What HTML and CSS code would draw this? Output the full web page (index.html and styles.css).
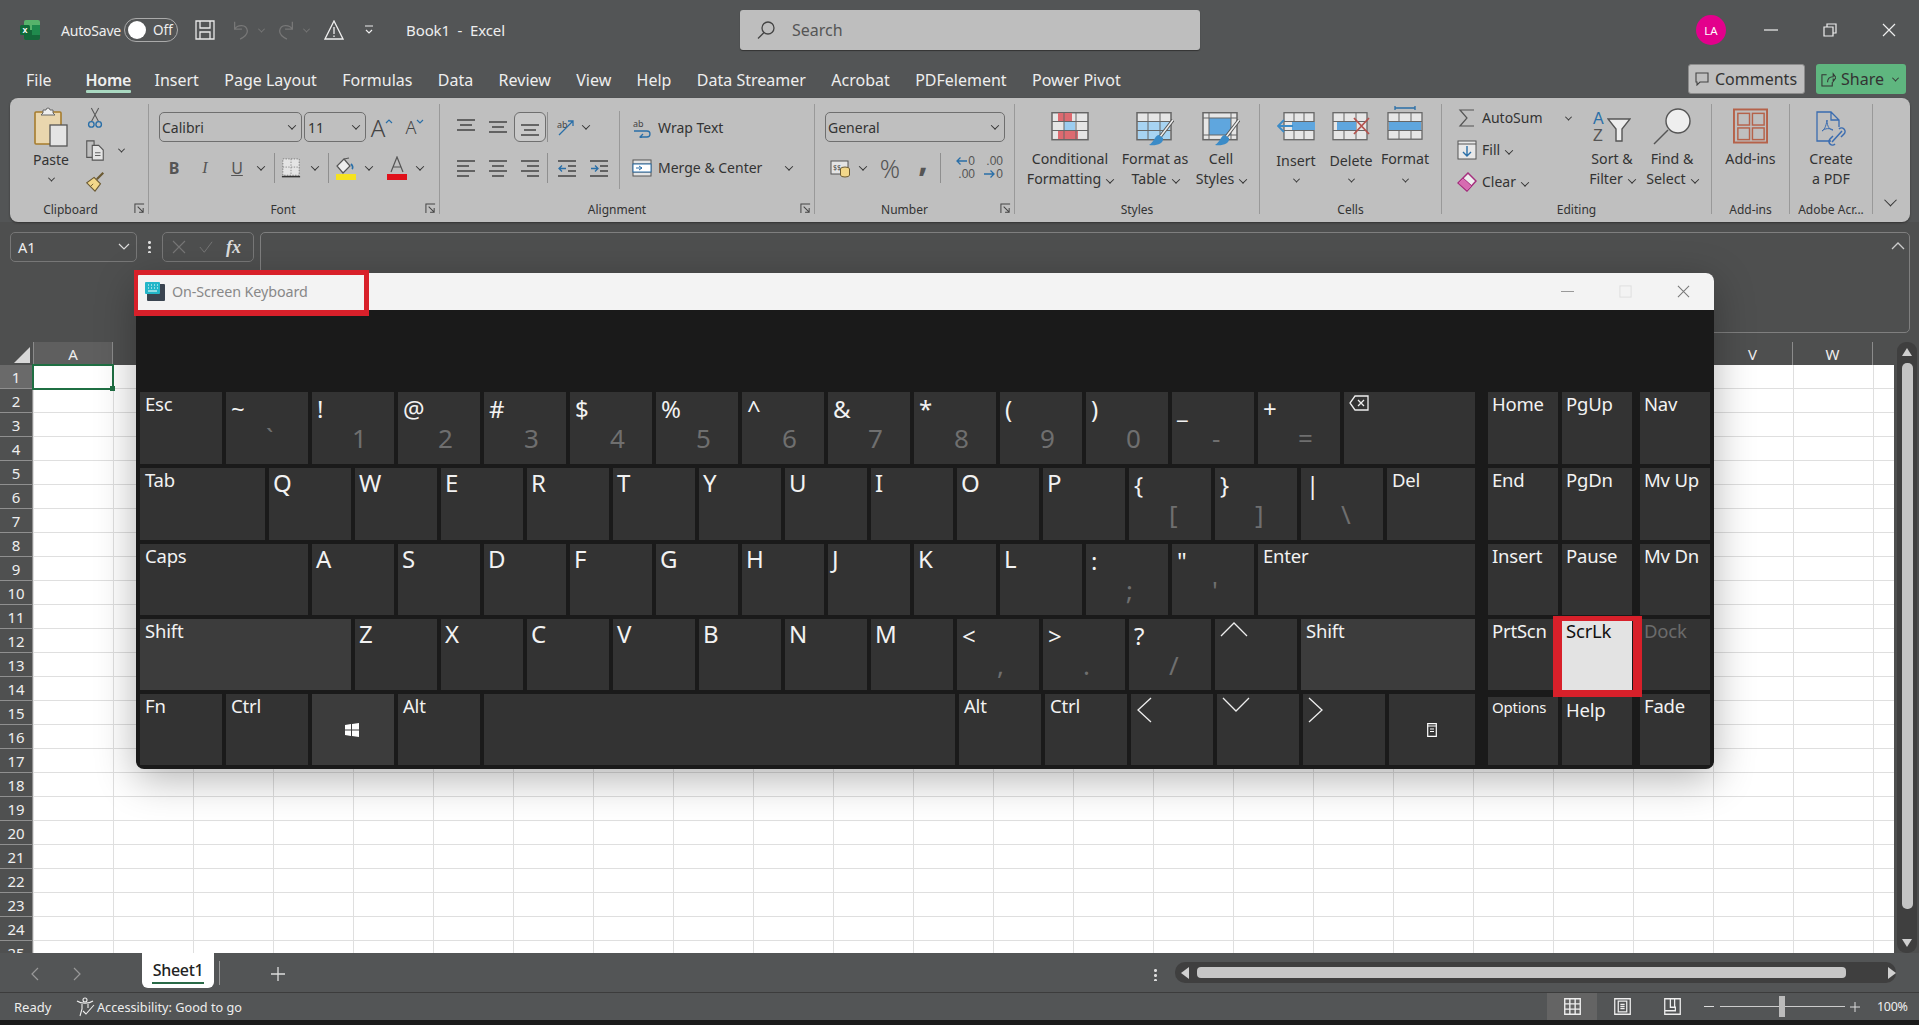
FILE: index.html
```html
<!DOCTYPE html>
<html lang="en">
<head>
<meta charset="utf-8">
<title>Book1 - Excel</title>
<link rel="stylesheet" href="styles.css">
</head>
<body>
<svg class="defs" aria-hidden="true">
  <symbol id="launch" viewBox="0 0 12 12"><path d="M1 11V1h10M5 3v.01M1 1M4 4l6 6M10 5.5V10H5.5" fill="none" stroke="#444" stroke-width="1.1"/></symbol>
  <symbol id="al-top" viewBox="0 0 20 20"><path d="M1 3h18M4 8h12M1 13h18" stroke="#444" stroke-width="1.4"/></symbol>
  <symbol id="al-mid" viewBox="0 0 20 20"><path d="M1 5h18M4 10h12M1 15h18" stroke="#444" stroke-width="1.4"/></symbol>
  <symbol id="al-bot" viewBox="0 0 20 20"><path d="M1 8h18M4 13h12M1 18h18" stroke="#444" stroke-width="1.4"/></symbol>
  <symbol id="h-left" viewBox="0 0 20 20"><path d="M1 3h18M1 8h12M1 13h18M1 18h12" stroke="#444" stroke-width="1.4"/></symbol>
  <symbol id="h-center" viewBox="0 0 20 20"><path d="M1 3h18M4 8h12M1 13h18M4 18h12" stroke="#444" stroke-width="1.4"/></symbol>
  <symbol id="h-right" viewBox="0 0 20 20"><path d="M1 3h18M7 8h12M1 13h18M7 18h12" stroke="#444" stroke-width="1.4"/></symbol>
</svg>

<div class="app">
  <header class="titlebar">
    <svg class="xl-logo" viewBox="0 0 20 20"><rect x="4" y="0" width="16" height="10" rx="2" fill="#57b36b"/><rect x="4" y="10" width="16" height="10" rx="2" fill="#14683a"/><rect x="12" y="5" width="8" height="10" fill="#1f8a4d"/><rect x="0" y="5" width="10" height="10" rx="1.5" fill="#0f6a38"/><text x="5" y="13" class="xl-x">x</text></svg>
    <span class="autosave">AutoSave</span>
    <span class="toggle"><span class="knob"></span><span class="toggle-text">Off</span></span>
    <svg class="qat save" viewBox="0 0 20 20"><path d="M1 1h18v18H1zM5 1v7h10V1M5 19v-7h10v7" fill="none" stroke="#e8e8e8" stroke-width="1.3"/></svg>
    <svg class="qat undo" viewBox="0 0 20 22"><path d="M3 2v8h8M3 10c3-5 13-6 14 2 0 4-4 7-8 9" fill="none" stroke="#777" stroke-width="1.4"/></svg>
    <i class="chev dim qchev"></i>
    <svg class="qat redo" viewBox="0 0 20 22"><path d="M17 2v8H9M17 10C14 5 4 4 3 12c0 4 4 7 8 9" fill="none" stroke="#777" stroke-width="1.4"/></svg>
    <i class="chev dim qchev"></i>
    <svg class="qat warn" viewBox="0 0 20 20"><path d="M10 1 19 19H1zM10 7v7M10 15.500v1.500" fill="none" stroke="#eee" stroke-width="1.3"/></svg>
    <svg class="qat more" viewBox="0 0 10 10"><path d="M1 1h8M2 5l3 3 3-3" fill="none" stroke="#eee" stroke-width="1.2"/></svg>
    <span class="doc-title">Book1&nbsp; - &nbsp;Excel</span>
    <div class="search">
      <svg class="search-ico" viewBox="0 0 18 18"><circle cx="11" cy="7" r="6" fill="none" stroke="#444" stroke-width="1.3"/><path d="M7 11.500 1 17.500" stroke="#444" stroke-width="1.3"/></svg>
      <span>Search</span>
    </div>
    <span class="avatar">LA</span>
    <svg class="win-btn first" viewBox="0 0 14 14"><path d="M0 7h14" stroke="#eee" stroke-width="1.2"/></svg>
    <svg class="win-btn" viewBox="0 0 14 14"><path d="M1 4h9v9H1zM4 4V1h9v9h-3" fill="none" stroke="#eee" stroke-width="1.2"/></svg>
    <svg class="win-btn" viewBox="0 0 14 14"><path d="m1 1 12 12M13 1 1 13" stroke="#eee" stroke-width="1.2"/></svg>
  </header>

  <nav class="tabs">
    <span class="tab">File</span>
    <span class="tab active">Home</span>
    <span class="tab">Insert</span>
    <span class="tab">Page Layout</span>
    <span class="tab">Formulas</span>
    <span class="tab">Data</span>
    <span class="tab">Review</span>
    <span class="tab">View</span>
    <span class="tab">Help</span>
    <span class="tab">Data Streamer</span>
    <span class="tab">Acrobat</span>
    <span class="tab">PDFelement</span>
    <span class="tab">Power Pivot</span>
    <span class="tab-spacer"></span>
    <button class="comments"><svg viewBox="0 0 14 14"><path d="M1 1h12v9H5l-3 3v-3H1z" fill="none" stroke="#444" stroke-width="1.1"/></svg>Comments</button>
    <button class="share"><svg viewBox="0 0 16 16"><path d="M6 3H1v12h11v-4M7 11c0-4 2-6 6-6V2l3 4-3 4V7" fill="none" stroke="#333" stroke-width="1.1"/></svg>Share<i class="chev"></i></button>
  </nav>

  <section class="ribbon">
    <div class="group g-clip">
      <div class="body row-body">
        <div class="paste">
          <svg class="paste-ico" viewBox="0 0 34 40"><rect x="1" y="5" width="26" height="32" rx="1" fill="#e9d6ae" stroke="#a67c2d" stroke-width="1.6"/><path d="M9 6V3h3a2 2 0 0 1 4 0h3v3l2 2H7z" fill="#eee" stroke="#666"/><rect x="16" y="18" width="17" height="21" fill="#e4e4e4" stroke="#555" stroke-width="1.3"/></svg>
          <span class="lbl">Paste</span>
          <i class="chev paste-chev"></i>
        </div>
        <div class="clip-tools">
          <svg class="tool" viewBox="0 0 20 24"><path d="M6 16 14 1M14 16 6 1" stroke="#555" stroke-width="1.1"/><circle cx="6" cy="19" r="3" fill="none" stroke="#2a6fa8" stroke-width="1.5"/><circle cx="14" cy="19" r="3" fill="none" stroke="#2a6fa8" stroke-width="1.5"/></svg>
          <div class="copy-row"><svg class="tool" viewBox="0 0 20 24"><path d="M8 20H1V2h8l0 5" fill="none" stroke="#555" stroke-width="1.2"/><path d="M7 7h7l5 5v11H7z" fill="#e4e4e4" stroke="#555" stroke-width="1.2"/><path d="M10 15h6M10 18h6" stroke="#555"/></svg><i class="chev"></i></div>
          <svg class="tool" viewBox="0 0 20 24"><path d="M19 2 12 9" stroke="#6b5a33" stroke-width="2.400"/><path d="M9 7l7 7-6 8-9-9z" fill="#f2d78a" stroke="#6b5a33" stroke-width="1.2"/><path d="M5 17l3-3" stroke="#6b5a33"/></svg>
        </div>
      </div>
      <div class="group-label">Clipboard</div>
      <svg class="launcher"><use href="#launch"/></svg>
    </div>

    <div class="group g-font">
      <div class="body">
        <div class="rb-row r1">
          <div class="select s-font"><span>Calibri</span><i class="chev"></i></div>
          <div class="select s-size"><span>11</span><i class="chev"></i></div>
          <span class="cell c32 grow-a">A<svg class="mini" viewBox="0 0 8 5"><path d="m1 4 3-3 3 3" fill="none" stroke="#2a6fa8" stroke-width="1.200"/></svg></span>
          <span class="cell c34 shrink-a">A<svg class="mini" viewBox="0 0 8 5"><path d="m1 1 3 3 3-3" fill="none" stroke="#2a6fa8" stroke-width="1.200"/></svg></span>
        </div>
        <div class="rb-row r2">
          <span class="cell c30 fmt bold">B</span>
          <span class="cell c32 fmt ital">I</span>
          <span class="cell c32 fmt und">U</span>
          <span class="cell c16"><i class="chev"></i></span>
          <span class="sep ml5"></span>
          <span class="cell c28"><svg class="ico20" viewBox="0 0 20 22"><rect x="1" y="1" width="18" height="18" fill="#e4e4e4" stroke="#777" stroke-dasharray="1.500 1.500"/><path d="M10 1v18M1 10h18" stroke="#888" stroke-dasharray="1.500 1.500"/><path d="M0 20.500h20" stroke="#333" stroke-width="1.600"/></svg></span>
          <span class="cell c20"><i class="chev"></i></span>
          <span class="sep ml3"></span>
          <span class="cell c30"><svg class="ico20w" viewBox="0 0 20 24"><path d="M8 3 1 10l6 7 7-7zM8 3l5-1" fill="#eee" stroke="#555" stroke-width="1.200"/><path d="M15 8c2 2 2 4 1 5" stroke="#2a6fa8" stroke-width="1.800" fill="none"/><rect y="18" width="20" height="6" fill="#f5e21f"/></svg></span>
          <span class="cell c16"><i class="chev"></i></span>
          <span class="cell c40"><svg class="ico20w" viewBox="0 0 20 24"><path d="M4 16 10 1l6 15M6 11h8" fill="none" stroke="#555" stroke-width="1.200"/><rect y="18" width="20" height="6" fill="#e0101a"/></svg></span>
          <span class="cell c6"><i class="chev"></i></span>
        </div>
      </div>
      <div class="group-label">Font</div>
      <svg class="launcher"><use href="#launch"/></svg>
    </div>

    <div class="group g-align">
      <div class="body row-body">
        <div class="align-left">
          <div class="rb-row r1">
            <span class="cell c32"><svg class="ico20" viewBox="0 0 20 20"><use href="#al-top"/></svg></span>
            <span class="cell c32"><svg class="ico20" viewBox="0 0 20 20"><use href="#al-mid"/></svg></span>
            <span class="cell c32 selected"><svg class="ico20" viewBox="0 0 20 20"><use href="#al-bot"/></svg></span>
            <span class="sep ml2 short"></span>
            <span class="cell c30"><svg class="ico20" viewBox="0 0 20 20"><text x="1" y="11" class="ab">ab</text><path d="M3 18 17 4M12 4h5v5" fill="none" stroke="#2a6fa8" stroke-width="1.300"/></svg></span>
            <span class="cell c10"><i class="chev"></i></span>
          </div>
          <div class="rb-row r2">
            <span class="cell c32"><svg class="ico20" viewBox="0 0 20 20"><use href="#h-left"/></svg></span>
            <span class="cell c32"><svg class="ico20" viewBox="0 0 20 20"><use href="#h-center"/></svg></span>
            <span class="cell c32"><svg class="ico20" viewBox="0 0 20 20"><use href="#h-right"/></svg></span>
            <span class="sep ml2"></span>
            <span class="cell c32 ind"><svg class="ico20" viewBox="0 0 20 20"><path d="M1 3h18M11 8h8M11 13h8M1 18h18" stroke="#444" stroke-width="1.300"/><path d="M9 10.500H2M5 7.500l-3 3 3 3" fill="none" stroke="#2a6fa8" stroke-width="1.300"/></svg></span>
            <span class="cell c32"><svg class="ico20" viewBox="0 0 20 20"><path d="M1 3h18M11 8h8M11 13h8M1 18h18" stroke="#444" stroke-width="1.300"/><path d="M2 10.500h7M6 7.500l3 3-3 3" fill="none" stroke="#2a6fa8" stroke-width="1.300"/></svg></span>
          </div>
        </div>
        <span class="vsep"></span>
        <div class="align-right">
          <div class="wrap-row"><svg class="ico20" viewBox="0 0 20 20"><text x="1" y="9" class="ab">ab</text><path d="M2 13h13a3 3 0 0 1 0 6H8M11 16l-3 3 3 3" fill="none" stroke="#2a6fa8" stroke-width="1.300"/></svg><span class="lbl ml6">Wrap Text</span></div>
          <div class="wrap-row merge"><svg class="ico20" viewBox="0 0 20 20"><rect x="1" y="2" width="18" height="16" fill="#e4e4e4" stroke="#555"/><path d="M1 6h18M1 14h18" stroke="#555"/><rect x="1" y="6" width="18" height="8" fill="#fff" stroke="#2a6fa8"/><path d="M4 10h6M7 8l3 2-3 2" fill="none" stroke="#2a6fa8"/></svg><span class="lbl ml6 merge-text">Merge &amp; Center</span><i class="chev"></i></div>
        </div>
      </div>
      <div class="group-label lab-align">Alignment</div>
      <svg class="launcher"><use href="#launch"/></svg>
    </div>

    <div class="group g-num">
      <div class="body">
        <div class="rb-row r1"><div class="select s-gen"><span>General</span><i class="chev"></i></div></div>
        <div class="rb-row r2">
          <span class="cell c30"><svg class="ico20" viewBox="0 0 20 20"><rect x="1" y="3" width="17" height="13" fill="#e4e4e4" stroke="#555"/><text x="3" y="12" class="cur">$$</text><ellipse cx="15" cy="11" rx="4.500" ry="2" fill="#f2d78a" stroke="#6b5a33"/><path d="M10.500 11v6a4.500 2 0 0 0 9 0v-6" fill="#f2d78a" stroke="#6b5a33"/></svg></span>
          <span class="cell c16"><i class="chev"></i></span>
          <span class="cell c38 pct">%</span>
          <span class="cell c28 comma">,</span>
          <span class="sep ml3"></span>
          <span class="cell c34 dec">
            <span class="dec-line"><svg class="dec-arrow" viewBox="0 0 11 8"><path d="M11 4H1M4.500 .5 1 4l3.500 3.500" fill="none" stroke="#2a6fa8" stroke-width="1.300"/></svg>0</span>
            <span class="dec-line">.00</span>
          </span>
          <span class="cell c28 dec">
            <span class="dec-line">.00</span>
            <span class="dec-line"><svg class="dec-arrow" viewBox="0 0 11 8"><path d="M0 4h10M6.500 .5 10 4 6.500 7.500" fill="none" stroke="#2a6fa8" stroke-width="1.300"/></svg>0</span>
          </span>
        </div>
      </div>
      <div class="group-label">Number</div>
      <svg class="launcher"><use href="#launch"/></svg>
    </div>

    <div class="group g-styles">
      <div class="body row-body">
        <div class="big w110">
          <svg class="big-ico" viewBox="0 0 38 34"><rect x="1" y=".7" width="36" height="27" fill="#e6e6e6" stroke="#666" stroke-width="1.500"/><rect x="7" y="1" width="14" height="8" fill="#dd6a70"/><rect x="13" y="10" width="11" height="8" fill="#9ccdf0"/><rect x="7" y="19" width="20" height="8" fill="#dd6a70"/><path d="M1 9.500h36M1 18.500h36M13 1v27M25 1v27" stroke="#666"/></svg>
          <span class="lbl">Conditional</span>
          <span class="lbl">Formatting<i class="chev ml4"></i></span>
        </div>
        <div class="big w60">
          <svg class="big-ico" viewBox="0 0 38 34"><rect x="1" y=".7" width="34" height="27" fill="#e6e6e6" stroke="#666" stroke-width="1.500"/><rect x="2" y="10" width="32" height="17" fill="#a7d3f2"/><path d="M1 9.500h34M1 18.500h34M12 1v27M24 1v27" stroke="#666"/><path d="M37 8 24 25" stroke="#555" stroke-width="3.500"/><path d="M37 8 24 25" stroke="#eee" stroke-width="1.500"/><path d="M23 23c-4 0-4 6-10 10 7 1 15-1 14-7z" fill="#3b8bc7"/></svg>
          <span class="lbl">Format as</span>
          <span class="lbl">Table<i class="chev ml4"></i></span>
        </div>
        <div class="big w72">
          <svg class="big-ico" viewBox="0 0 38 34"><rect x="1" y=".7" width="34" height="27" fill="#e6e6e6" stroke="#666" stroke-width="1.500"/><rect x="7" y="6" width="22" height="17" fill="#5fa6de"/><path d="M1 6h34M1 23h34M7 1v27M29 1v27" stroke="#666"/><path d="M37 8 24 25" stroke="#555" stroke-width="3.500"/><path d="M37 8 24 25" stroke="#eee" stroke-width="1.500"/><path d="M23 23c-4 0-4 6-10 10 7 1 15-1 14-7z" fill="#3b8bc7"/></svg>
          <span class="lbl">Cell</span>
          <span class="lbl">Styles<i class="chev ml4"></i></span>
        </div>
      </div>
      <div class="group-label">Styles</div>
    </div>

    <div class="group g-cells">
      <div class="body row-body pl3">
        <div class="big w66">
          <svg class="big-ico" viewBox="0 0 38 34"><rect x="7" y=".7" width="30" height="27" fill="#e6e6e6" stroke="#666" stroke-width="1.300"/><path d="M17 1v27M27 1v27M7 9.500h30M7 18.500h30" stroke="#666"/><rect x="15" y="10" width="23" height="8" fill="#5fa6de"/><path d="M16 14H1M7 8l-6 6 6 6" fill="none" stroke="#3b8bc7" stroke-width="1.800"/></svg>
          <span class="lbl del-l">Insert</span>
          <i class="chev big-chev"></i>
        </div>
        <div class="big w44">
          <svg class="big-ico" viewBox="0 0 38 34"><rect x="1" y=".7" width="34" height="27" fill="#e6e6e6" stroke="#666" stroke-width="1.300"/><path d="M12 1v27M24 1v27M1 9.500h34M1 18.500h34" stroke="#666"/><rect x="5" y="10" width="19" height="8" fill="#5fa6de"/><path d="m22 6 15 16M37 6 22 22" stroke="#b5524e" stroke-width="1.800"/></svg>
          <span class="lbl del-l">Delete</span>
          <i class="chev big-chev"></i>
        </div>
        <div class="big w64">
          <svg class="big-ico fmt-ico" viewBox="0 0 38 34"><path d="M9 2h20M9 0v4M29 0v4" stroke="#2a6fa8" stroke-width="1.300"/><rect x="2" y="6.700" width="34" height="26.500" fill="#e6e6e6" stroke="#666" stroke-width="1.300"/><path d="M13 7v26M25 7v26M2 15.500h34M2 24.500h34" stroke="#666"/><rect x="3" y="16" width="32" height="8" fill="#5fa6de"/></svg>
          <span class="lbl">Format</span>
          <i class="chev big-chev fmt-chev"></i>
        </div>
      </div>
      <div class="group-label">Cells</div>
    </div>

    <div class="group g-edit">
      <div class="body row-body">
        <div class="edit-list">
          <div class="edit-row"><svg class="ico20" viewBox="0 0 18 20"><path d="M16 2H2l7 8-7 8h14" fill="none" stroke="#555" stroke-width="1.200"/></svg><span class="lbl">AutoSum</span><i class="chev auto-chev"></i></div>
          <div class="edit-row"><svg class="ico20" viewBox="0 0 20 20"><rect x="1" y="1" width="18" height="18" fill="#e8e8e8" stroke="#555"/><path d="M1 4h18" stroke="#555"/><path d="M10 6v10M6 12l4 4 4-4" fill="none" stroke="#2a6fa8" stroke-width="1.400"/></svg><span class="lbl">Fill<i class="chev ml4"></i></span></div>
          <div class="edit-row"><svg class="ico20" viewBox="0 0 20 20"><path d="M11 1 19 9l-9 10L1 11z" fill="#eee" stroke="#a52f7e" stroke-width="1.500"/><path d="M6 6l9 8-5 5-9-8z" fill="#d76bb1" stroke="#a52f7e"/></svg><span class="lbl">Clear<i class="chev ml4"></i></span></div>
        </div>
        <div class="big w64">
          <div class="sort-ico">
            <span class="az"><span class="az-a">A</span><span class="az-z">Z</span></span>
            <svg class="funnel" viewBox="0 0 24 26"><path d="M1 1h22l-8 10v12H9V11z" fill="#eee" stroke="#555" stroke-width="1.400"/></svg>
          </div>
          <span class="lbl">Sort &amp;</span>
          <span class="lbl">Filter<i class="chev ml4"></i></span>
        </div>
        <div class="big w56">
          <svg class="big-ico find-ico" viewBox="0 0 38 37"><circle cx="25" cy="13" r="12" fill="#eee" stroke="#555" stroke-width="1.400"/><path d="M15 22 1 36" stroke="#555" stroke-width="1.400"/></svg>
          <span class="lbl">Find &amp;</span>
          <span class="lbl">Select<i class="chev ml4"></i></span>
        </div>
      </div>
      <div class="group-label">Editing</div>
    </div>

    <div class="group g-add">
      <div class="body row-body">
        <div class="big w78">
          <svg class="big-ico add-ico" viewBox="0 0 36 36"><rect x="1" y="1" width="34" height="34" fill="none" stroke="#b5624a" stroke-width="2"/><rect x="5" y="5" width="12" height="12" fill="none" stroke="#b5624a" stroke-width="1.500"/><rect x="20" y="5" width="12" height="12" fill="none" stroke="#b5624a" stroke-width="1.500"/><rect x="5" y="20" width="12" height="12" fill="none" stroke="#b5624a" stroke-width="1.500"/><rect x="20" y="20" width="12" height="12" fill="none" stroke="#b5624a" stroke-width="1.500"/></svg>
          <span class="lbl">Add-ins</span>
        </div>
      </div>
      <div class="group-label">Add-ins</div>
    </div>

    <div class="group g-adobe">
      <div class="body row-body">
        <div class="big w83">
          <svg class="big-ico pdf-ico" viewBox="0 0 30 35"><path d="M15 30H1V1h14l8 8v7M15 1v8h8" fill="none" stroke="#3a6cb0" stroke-width="1.300"/><path d="M11 9c-1 7-3 10-5 11 3-3 8-3 11-1-3 0-6-3-6-10" fill="none" stroke="#3a6cb0"/><path d="M16 31l10-11M19 33a3.500 3.500 0 0 1-5-5l3-3M23 18a3.500 3.500 0 0 1 5 5l-3 3" fill="none" stroke="#3a6cb0" stroke-width="1.500"/></svg>
          <span class="lbl">Create</span>
          <span class="lbl">a PDF</span>
        </div>
      </div>
      <div class="group-label">Adobe Acr...</div>
    </div>
    <i class="chev collapse"></i>
  </section>

  <section class="formula">
    <div class="name-box"><span>A1</span><svg viewBox="0 0 12 8"><path d="m1 1 5 5 5-5" fill="none" stroke="#ddd" stroke-width="1.200"/></svg></div>
    <span class="fdots"></span>
    <div class="fx-box">
      <svg viewBox="0 0 14 14"><path d="m1 1 12 12M13 1 1 13" stroke="#777" stroke-width="1.100"/></svg>
      <svg viewBox="0 0 16 14"><path d="m1 7 5 6L15 1" fill="none" stroke="#777" stroke-width="1.100"/></svg>
      <span class="fx">fx</span>
    </div>
    <div class="formula-input"><svg class="fchev" viewBox="0 0 14 8"><path d="m1 7 6-6 6 6" fill="none" stroke="#ccc" stroke-width="1.300"/></svg></div>
  </section>

  <section class="sheet">
    <div class="grid-wrap">
      <div class="col-heads">
        <div class="corner"><svg viewBox="0 0 16 16"><path d="M16 0v16H0z" fill="#d8d8d8"/></svg></div>
        <span class="ch sel">A</span><span class="ch">B</span><span class="ch">C</span><span class="ch">D</span><span class="ch">E</span><span class="ch">F</span><span class="ch">G</span><span class="ch">H</span><span class="ch">I</span><span class="ch">J</span><span class="ch">K</span><span class="ch">L</span><span class="ch">M</span><span class="ch">N</span><span class="ch">O</span><span class="ch">P</span><span class="ch">Q</span><span class="ch">R</span><span class="ch">S</span><span class="ch">T</span><span class="ch">U</span><span class="ch">V</span><span class="ch">W</span>
      </div>
      <div class="grid-body">
        <div class="row-heads">
          <span class="rh sel">1</span><span class="rh">2</span><span class="rh">3</span><span class="rh">4</span><span class="rh">5</span><span class="rh">6</span><span class="rh">7</span><span class="rh">8</span><span class="rh">9</span><span class="rh">10</span><span class="rh">11</span><span class="rh">12</span><span class="rh">13</span><span class="rh">14</span><span class="rh">15</span><span class="rh">16</span><span class="rh">17</span><span class="rh">18</span><span class="rh">19</span><span class="rh">20</span><span class="rh">21</span><span class="rh">22</span><span class="rh">23</span><span class="rh">24</span><span class="rh">25</span>
        </div>
        <div class="cells"><span class="active-cell"></span></div>
      </div>
    </div>
    <div class="vscroll">
      <svg class="arr" viewBox="0 0 10 8"><path d="M5 0 10 8H0z" fill="#d0d0d0"/></svg>
      <span class="vthumb"></span>
      <svg class="arr" viewBox="0 0 10 8"><path d="M5 8 10 0H0z" fill="#d0d0d0"/></svg>
    </div>
  </section>

  <section class="sheetbar">
    <svg class="nav first-nav" viewBox="0 0 8 14"><path d="M7 1 1 7l6 6" fill="none" stroke="#999" stroke-width="1.200"/></svg>
    <svg class="nav" viewBox="0 0 8 14"><path d="m1 1 6 6-6 6" fill="none" stroke="#999" stroke-width="1.200"/></svg>
    <div class="sheet-tab"><span>Sheet1</span></div>
    <span class="tab-sep"></span>
    <svg class="plus" viewBox="0 0 14 14"><path d="M7 0v14M0 7h14" stroke="#ddd" stroke-width="1.300"/></svg>
    <span class="bar-spacer"></span>
    <span class="vdots"></span>
    <div class="hscroll">
      <svg class="harr" viewBox="0 0 8 12"><path d="M0 6 8 0v12z" fill="#d0d0d0"/></svg>
      <span class="hthumb"></span>
      <svg class="harr" viewBox="0 0 8 12"><path d="M8 6 0 0v12z" fill="#d0d0d0"/></svg>
    </div>
  </section>

  <footer class="status">
    <span class="ready">Ready</span>
    <svg class="a11y" viewBox="0 0 20 20"><circle cx="9" cy="3" r="2" fill="none" stroke="#eee" stroke-width="1.100"/><path d="M1 4c4 3 12 3 16 0M6 7v5l-2 7M12 7v4M7 14l3 3 8-9" fill="none" stroke="#eee" stroke-width="1.100"/></svg>
    <span class="a11y-text">Accessibility: Good to go</span>
    <span class="bar-spacer"></span>
    <span class="view active-view"><svg viewBox="0 0 16 16"><path d="M.7.7h14.600v14.600H.7zM5.500.7v14.600M10.500.7v14.600M.7 5.500h14.600M.7 10.500h14.600" fill="none" stroke="#eee" stroke-width="1.300"/></svg></span>
    <span class="view"><svg viewBox="0 0 16 16"><path d="M.7.7h14.600v14.600H.7zM4 3h8v10H4zM6 6h4M6 8h4M6 10h4" fill="none" stroke="#eee" stroke-width="1.200"/></svg></span>
    <span class="view"><svg viewBox="0 0 16 16"><path d="M.7.7h14.600v14.600H.7zM6 .7v8h4V.7M.7 12h10V8" fill="none" stroke="#eee" stroke-width="1.200"/></svg></span>
    <span class="zoom-minus"></span>
    <span class="slider"><span class="slider-thumb"></span></span>
    <svg class="zoom-plus" viewBox="0 0 10 10"><path d="M5 0v10M0 5h10" stroke="#ddd"/></svg>
    <span class="zoom-val">100%</span>
  </footer>
  <div class="bottom-edge"></div>
</div>

<div class="osk">
  <div class="osk-title">
    <svg class="osk-ico" viewBox="0 0 20 20"><rect x="2" y="2" width="18" height="17" rx="1" fill="#3a4450"/><rect x="0" y="0" width="15" height="12" rx="1" fill="#23b6c9"/><path d="M3 3h1M6 3h1M9 3h1M12 3h1M3 6h1M6 6h1M9 6h1M12 6h1M3 9h9" stroke="#fff"/></svg>
    <span class="osk-name">On-Screen Keyboard</span>
    <span class="bar-spacer"></span>
    <svg class="osk-btn" viewBox="0 0 14 14"><path d="M0 7h14" stroke="#999" stroke-width="1.100"/></svg>
    <svg class="osk-btn" viewBox="0 0 14 14"><rect x="1" y="1" width="12" height="12" fill="none" stroke="#ddd"/></svg>
    <svg class="osk-btn" viewBox="0 0 14 14"><path d="m1 1 12 12M13 1 1 13" stroke="#777" stroke-width="1.100"/></svg>
  </div>
  <div class="keys">
    <div class="kb-row tall-row">
      <div class="key">Esc</div>
      <div class="key dual"><span class="up">~</span><span class="lo pun">`</span></div>
      <div class="key dual"><span class="up">!</span><span class="lo">1</span></div>
      <div class="key dual"><span class="up">@</span><span class="lo">2</span></div>
      <div class="key dual"><span class="up">#</span><span class="lo">3</span></div>
      <div class="key dual"><span class="up">$</span><span class="lo">4</span></div>
      <div class="key dual"><span class="up">%</span><span class="lo">5</span></div>
      <div class="key dual"><span class="up">^</span><span class="lo">6</span></div>
      <div class="key dual"><span class="up">&amp;</span><span class="lo">7</span></div>
      <div class="key dual"><span class="up">*</span><span class="lo">8</span></div>
      <div class="key dual"><span class="up">(</span><span class="lo">9</span></div>
      <div class="key dual"><span class="up">)</span><span class="lo">0</span></div>
      <div class="key dual"><span class="up">_</span><span class="lo">-</span></div>
      <div class="key dual"><span class="up">+</span><span class="lo">=</span></div>
      <div class="key w131"><svg class="bksp" viewBox="0 0 20 16"><path d="M6 1h13v14H6L1 8zM9 5l6 6M15 5l-6 6" fill="none" stroke="#eee" stroke-width="1.300"/></svg></div>
      <div class="key nav-key nav-first">Home</div>
      <div class="key nav-key">PgUp</div>
      <div class="key nav-key nav-last">Nav</div>
    </div>
    <div class="kb-row tall-row">
      <div class="key w125">Tab</div>
      <div class="key big-l">Q</div><div class="key big-l">W</div><div class="key big-l">E</div><div class="key big-l">R</div><div class="key big-l">T</div><div class="key big-l">Y</div><div class="key big-l">U</div><div class="key big-l">I</div><div class="key big-l">O</div><div class="key big-l">P</div>
      <div class="key dual"><span class="up">{</span><span class="lo">[</span></div>
      <div class="key dual"><span class="up">}</span><span class="lo">]</span></div>
      <div class="key dual"><span class="up">|</span><span class="lo">\</span></div>
      <div class="key w88">Del</div>
      <div class="key nav-key nav-first">End</div>
      <div class="key nav-key">PgDn</div>
      <div class="key nav-key nav-last">Mv Up</div>
    </div>
    <div class="kb-row">
      <div class="key w168">Caps</div>
      <div class="key big-l">A</div><div class="key big-l">S</div><div class="key big-l">D</div><div class="key big-l">F</div><div class="key big-l">G</div><div class="key big-l">H</div><div class="key big-l">J</div><div class="key big-l">K</div><div class="key big-l">L</div>
      <div class="key dual"><span class="up">:</span><span class="lo">;</span></div>
      <div class="key dual"><span class="up">"</span><span class="lo">'</span></div>
      <div class="key w217">Enter</div>
      <div class="key nav-key nav-first">Insert</div>
      <div class="key nav-key">Pause</div>
      <div class="key nav-key nav-last">Mv Dn</div>
    </div>
    <div class="kb-row">
      <div class="key w211 lit">Shift</div>
      <div class="key big-l">Z</div><div class="key big-l">X</div><div class="key big-l">C</div><div class="key big-l">V</div><div class="key big-l">B</div><div class="key big-l">N</div><div class="key big-l">M</div>
      <div class="key dual"><span class="up">&lt;</span><span class="lo">,</span></div>
      <div class="key dual"><span class="up">&gt;</span><span class="lo">.</span></div>
      <div class="key dual"><span class="up">?</span><span class="lo">/</span></div>
      <div class="key"><svg class="arrow-up" viewBox="0 0 28 15"><path d="M1 14 14 1l13 13" fill="none" stroke="#eee" stroke-width="1.300"/></svg></div>
      <div class="key w174 lit">Shift</div>
      <div class="key nav-key nav-first">PrtScn</div>
      <div class="key nav-key on">ScrLk</div>
      <div class="key nav-key nav-last off">Dock</div>
    </div>
    <div class="kb-row">
      <div class="key">Fn</div>
      <div class="key">Ctrl</div>
      <div class="key lit center"><svg class="win" viewBox="0 0 14 14"><path d="M0 2 6 1v5.500H0zM7 1l7-1v6.500H7zM0 7.500h6V13l-6-1zM7 7.500h7V14l-7-1z" fill="#fff"/></svg></div>
      <div class="key">Alt</div>
      <div class="key w471"></div>
      <div class="key">Alt</div>
      <div class="key">Ctrl</div>
      <div class="key"><svg class="arrow-side" viewBox="0 0 16 26"><path d="M15 1 2 13l13 12" fill="none" stroke="#eee" stroke-width="1.300"/></svg></div>
      <div class="key"><svg class="arrow-dn" viewBox="0 0 28 15"><path d="m1 1 13 13L27 1" fill="none" stroke="#eee" stroke-width="1.300"/></svg></div>
      <div class="key"><svg class="arrow-side" viewBox="0 0 16 26"><path d="m1 1 13 12L1 25" fill="none" stroke="#eee" stroke-width="1.300"/></svg></div>
      <div class="key w86 center"><svg class="menu-key" viewBox="0 0 10 14"><path d="M.7.7h8.600v12.600H.7zM.7 3h8.600M3 6h4M3 8.500h4" fill="none" stroke="#fff" stroke-width="1.200"/></svg></div>
      <div class="key nav-key nav-first opt">Options</div>
      <div class="key nav-key help">Help</div>
      <div class="key nav-key nav-last">Fade</div>
    </div>
  </div>
  <span class="mark mark-title"></span>
  <span class="mark mark-key"></span>
</div>
</body>
</html>
```

FILE: styles.css
```css
* { box-sizing: border-box; }
html, body { margin: 0; padding: 0; width: 1919px; height: 1025px; overflow: hidden; }
body { font-family: "Noto Sans", "Open Sans", sans-serif; background: #1a1a1a; color: #eee; position: relative; }
.defs { position: absolute; width: 0; height: 0; }
.app { width: 1919px; height: 1025px; display: flex; flex-direction: column; background: #535556; }
.chev { display: inline-block; width: 6px; height: 6px; border-right: 1.4px solid #333; border-bottom: 1.4px solid #333; transform: rotate(45deg) translate(-1px, -1px); flex: none; }
.chev.dim { border-color: #777; }
.ml4 { margin-left: 6px; }
.ml6 { margin-left: 6px; }
.bar-spacer { flex: 1; }

/* title bar */
.titlebar { height: 62px; display: flex; align-items: center; padding: 0 0 2px 20px; flex: none; }
.xl-logo { width: 20px; height: 20px; }
.xl-x { font: bold 9px "Liberation Sans", sans-serif; fill: #fff; text-anchor: middle; }
.autosave { font-size: 14px; margin-left: 21px; width: 63px; letter-spacing: -.2px; }
.toggle { width: 54px; height: 24px; border: 1px solid #aaa; border-radius: 12px; margin-left: 0; display: flex; align-items: center; padding-left: 3px; }
.knob { width: 18px; height: 18px; background: #fff; border-radius: 50%; }
.toggle-text { font-size: 13.5px; margin-left: 7px; }
.qat { height: 20px; width: 20px; flex: none; }
.save { margin-left: 17px; }
.undo { margin-left: 16px; }
.qchev { width: 5px; height: 5px; margin-left: 8px; }
.redo { margin-left: 12px; }
.warn { margin-left: 15px; }
.more { width: 10px; height: 10px; margin-left: 20px; }
.doc-title { font-size: 15px; margin-left: 32px; width: 334px; letter-spacing: -.1px; }
.search { width: 460px; height: 40px; background: #bebebe; border-radius: 3px; box-shadow: 0 1px 1px #333; display: flex; align-items: center; padding-left: 17px; color: #555; font-size: 16px; }
.search-ico { width: 18px; height: 18px; margin-right: 17px; }
.avatar { width: 30px; height: 30px; border-radius: 50%; background: #e3008c; color: #fff; font-size: 11.5px; display: flex; align-items: center; justify-content: center; margin-left: 496px; }
.win-btn { width: 14px; height: 14px; }
.win-btn.first { margin-left: 38px; }
.win-btn + .win-btn { margin-left: 45px; }

/* tabs */
.tabs { height: 36px; flex: none; display: flex; align-items: flex-start; padding-left: 26px; gap: 25.400px; font-size: 16px; }
.tab { height: 32px; line-height: 36px; position: relative; white-space: nowrap; }
.tab.active { font-weight: 600; margin-left: 8.600px; margin-right: -2px; letter-spacing: -.3px; }
.tab.active::after { content: ""; position: absolute; left: 0; right: 0; bottom: 1px; height: 3px; background: #a9d8c1; border-radius: 1px; }
.tab-spacer { flex: 1; }
.comments, .share { font: inherit; height: 30px; margin-top: 2px; border-radius: 3px; display: flex; align-items: center; padding: 0; color: #333; font-size: 16px; }
.comments { width: 117px; background: #bfbfbf; border: 1px solid #8c8c8c; margin-right: -14.400px; padding-left: 6px; }
.comments svg { width: 14px; height: 14px; margin-right: 6px; }
.share { width: 90px; background: #5fb67f; border: 0; margin-right: 13px; padding-left: 5px; }
.share svg { width: 15px; height: 15px; margin-right: 5px; }
.share .chev { width: 5px; height: 5px; margin-left: 9px; }

/* ribbon */
.ribbon { height: 124px; margin: 0 9px 0 10px; background: #bfbfbf; border-radius: 8px; padding: 6px 0 8px; display: flex; color: #333; flex: none; box-shadow: 0 1px 2px #333; font-size: 14px; position: relative; }
.group { height: 110px; border-right: 1px solid #999; display: flex; flex-direction: column; position: relative; flex: none; }
.g-clip { width: 139px; }
.g-font { width: 291px; padding-left: 10px; }
.g-align { width: 375px; padding-left: 10px; }
.g-num { width: 200px; padding-left: 10px; }
.g-styles { width: 245px; }
.g-cells { width: 182px; }
.g-edit { width: 270px; }
.g-add { width: 78px; }
.g-adobe { width: 83px; }
.body { flex: 1; padding-top: 8px; min-height: 0; }
.row-body { display: flex; padding-top: 0; }
.pl3 { padding-left: 3px; }
.group-label { height: 18px; line-height: 18px; margin-bottom: -5px; text-align: center; font-size: 12px; white-space: nowrap; flex: none; }
.g-clip .group-label { margin-right: 17px; }
.g-font .group-label { margin-left: -10px; margin-right: 22px; }
.g-num .group-label { margin-left: -30px; }
.lab-align { margin-left: -30px; }
.launcher { position: absolute; right: 3px; bottom: 0; width: 11px; height: 11px; }
.lbl { white-space: nowrap; display: block; line-height: 20px; }
.rb-row { display: flex; align-items: center; }
.r1 { height: 30px; }
.r2 { height: 35px; margin-top: 8px; }
.cell { display: flex; align-items: center; justify-content: center; flex: none; height: 30px; position: relative; }
.c6 { width: 6px; } .c10 { width: 10px; } .c16 { width: 16px; } .c20 { width: 20px; } .c28 { width: 28px; } .c30 { width: 30px; } .c32 { width: 32px; } .c34 { width: 34px; } .c38 { width: 38px; } .c40 { width: 40px; }
.sep { width: 1px; height: 30px; background: #8f8f8f; flex: none; }
.ml2 { margin-left: 1px; margin-right: 3px; } .ml3 { margin-left: 3px; margin-right: 2px; } .ml5 { margin-left: 5px; margin-right: 2px; }
.ico20 { width: 20px; height: 20px; flex: none; }
.ico20w { width: 20px; height: 24px; }
.select { height: 30px; border: 1px solid #6f6f6f; border-radius: 5px; display: flex; align-items: center; justify-content: space-between; padding: 0 6px 0 2px; font-size: 14px; flex: none; }
.s-font { width: 143px; margin-right: 2px; }
.s-size { width: 62px; padding-left: 3px; }
.s-gen { width: 180px; }
.grow-a { font-size: 24px; color: #444; font-weight: 300; }
.shrink-a { font-size: 18px; color: #444; font-weight: 300; }
.mini { width: 8px; height: 5px; align-self: flex-start; margin-top: 7px; }
.fmt { font-size: 16px; color: #555; }
.bold { font-weight: 700; }
.ital { font-style: italic; font-family: "Liberation Serif", serif; }
.und { text-decoration: underline; }
.paste { width: 62px; margin-left: 10px; display: flex; flex-direction: column; align-items: center; padding-top: 3px; }
.paste-ico { width: 34px; height: 40px; margin-bottom: 3px; }
.paste-chev { width: 5px; height: 5px; margin-top: 7px; }
.clip-tools { width: 55px; margin-left: 1px; padding-top: 3px; display: flex; flex-direction: column; gap: 10px; }
.tool { width: 20px; height: 22px; display: block; margin-left: 2px; flex: none; }
.copy-row { display: flex; align-items: center; gap: 14px; }
.copy-row .chev { width: 5px; height: 5px; }
.align-left { width: 169px; padding-top: 8px; }
.vsep { width: 1px; height: 78px; margin-top: 7px; background: #999; flex: none; }
.align-right { padding-left: 6px; padding-top: 13px; flex: 1; }
.wrap-row { display: flex; align-items: center; height: 22px; padding-left: 6px; }
.wrap-row .lbl { font-size: 14px; }
.merge { margin-top: 18px; }
.merge-text { width: 128px; }
.selected { border: 1px solid #6f6f6f; border-radius: 6px; background: #c9c9c9; }
.ab { font-size: 9px; fill: #444; }
.cur { font-size: 7px; fill: #444; }
.pct { font-size: 25px; font-weight: 300; color: #555; }
.comma { font-size: 34px; font-weight: 700; color: #555; line-height: 1; padding-bottom: 18px; }
.dec { flex-direction: column; font: 12px/13px "Liberation Sans", sans-serif; color: #555; align-items: flex-end; padding-right: 2px; }
.dec-line { display: flex; align-items: center; gap: 1px; height: 13px; }
.dec-arrow { width: 11px; height: 8px; flex: none; }
.big { display: flex; flex-direction: column; align-items: center; flex: none; }
.big .lbl { font-size: 14.200px; }
.w110 { width: 110px; } .w60 { width: 60px; } .w72 { width: 72px; } .w66 { width: 66px; } .w44 { width: 44px; } .w64 { width: 64px; } .w56 { width: 56px; } .w78 { width: 77px; } .w83 { width: 82px; }
.big-ico { width: 38px; height: 34px; margin: 8px 0 3px; flex: none; }
.big-chev { width: 5px; height: 5px; margin-top: 7px; }
.fmt-chev { margin-top: 9px; }
.del-l { padding-top: 2px; line-height: 20px; height: 22px; }
.big .del-l { height: 22px; }
.fmt-ico { margin: 2px 0 9px; }
.sort-ico { width: 38px; height: 34px; margin: 6px 0 5px; display: flex; flex: none; }
.az { display: flex; flex-direction: column; width: 14px; font: 16px/17px "Liberation Sans", sans-serif; flex: none; }
.az-a { color: #2a6fa8; }
.az-z { color: #555; }
.funnel { width: 24px; height: 26px; margin-top: 8px; flex: none; }
.find-ico { height: 37px; margin: 4px 0 4px; }
.add-ico { width: 35px; height: 36px; margin: 4px 0 5px; }
.pdf-ico { width: 30px; height: 35px; margin: 7px 0 3px; }
.edit-list { width: 138px; padding-left: 15px; margin-top: -2px; }
.edit-row { display: flex; align-items: center; height: 32px; gap: 5px; }
.auto-chev { width: 5px; height: 5px; margin-left: auto; margin-right: 9px; }
.collapse { position: absolute; right: 15px; bottom: 16px; width: 9px; height: 9px; }

/* formula bar */
.formula { height: 120px; flex: none; background: #4e4f4f; display: flex; align-items: flex-start; padding: 10px 9px 0 10px; }
.name-box { width: 127px; height: 30px; border: 1px solid #777; border-radius: 5px; display: flex; align-items: center; justify-content: space-between; padding: 0 6px 0 7px; font-size: 14.500px; }
.name-box svg { width: 12px; height: 8px; }
.fdots { width: 3px; height: 13px; margin: 8px 11px 0 11px; background: radial-gradient(circle, #ddd 1.300px, transparent 1.600px) 0 0 / 3px 5px; }
.fx-box { width: 92px; height: 30px; border: 1px solid #777; border-radius: 5px; display: flex; align-items: center; padding-left: 9px; gap: 13px; }
.fx-box svg { width: 14px; height: 14px; }
.fx { font: italic bold 18px "Liberation Serif", serif; color: #ddd; }
.formula-input { flex: 1; height: 101px; margin-left: 6px; border: 1px solid #7f7f7f; border-radius: 5px; position: relative; }
.fchev { position: absolute; right: 4px; top: 9px; width: 14px; height: 8px; }

/* sheet */
.sheet { height: 611px; flex: none; display: flex; background: #4e4f4f; }
.grid-wrap { width: 1894px; display: flex; flex-direction: column; overflow: hidden; }
.col-heads { height: 23px; display: flex; flex: none; }
.corner { width: 33px; display: flex; justify-content: flex-end; align-items: center; padding: 2px 3px 0 0; flex: none; }
.corner svg { width: 16px; height: 16px; }
.ch { width: 80px; flex: none; border-right: 1px solid #8b8b8b; text-align: center; font-size: 15px; line-height: 24px; }
.ch.sel { background: #5f5f5f; border-left: 1px solid #8b8b8b; }
.grid-body { flex: 1; display: flex; min-height: 0; }
.row-heads { width: 33px; flex: none; display: flex; flex-direction: column; }
.rh { height: 24px; flex: none; text-align: center; font-size: 15px; line-height: 25px; border-bottom: 1px solid #8f8f8f; border-right: 1px solid #8f8f8f; background: #4f5050; }
.rh.sel { background: #6a6a6a; }
.cells { flex: 1; position: relative; background-color: #fff; background-image: linear-gradient(to right, transparent 79px, #dfdfdf 79px), linear-gradient(to bottom, transparent 23px, #dfdfdf 23px); background-size: 80px 24px; background-position: 1px 0, 0 0; }
.active-cell { position: absolute; left: -1px; top: -1px; width: 82px; height: 26px; border: 2px solid #1f6f43; }
.active-cell::after { content: ""; position: absolute; right: -3px; bottom: -3px; width: 5px; height: 5px; background: #1f6f43; border: 0; }
.vscroll { width: 20px; margin-left: 3px; background: #3f3f3f; border-radius: 9px; display: flex; flex-direction: column; align-items: center; padding: 6px 0; }
.arr { width: 12px; height: 8px; flex: none; }
.vthumb { width: 11px; flex: 1; background: #c4c4c4; border-radius: 5px; margin: 7px 0 30px; }

/* sheet tabs */
.sheetbar { height: 40px; flex: none; display: flex; align-items: flex-start; border-bottom: 1px solid #3c3c3c; }
.nav { width: 8px; height: 14px; margin-left: 34px; margin-top: 14px; flex: none; }
.first-nav { margin-left: 31px; }
.sheet-tab { width: 72px; height: 35px; margin-left: 61px; background: #fff; border-radius: 0 0 6px 6px; color: #222; display: flex; justify-content: center; font-size: 16px; font-weight: 500; padding-top: 6px; letter-spacing: -.3px; flex: none; }
.sheet-tab span { height: 25px; border-bottom: 2px solid #2a6a48; padding: 0 1px; line-height: 22px; }
.tab-sep { width: 1px; height: 24px; background: #999; margin: 8px 0 0 5px; flex: none; }
.plus { width: 14px; height: 14px; margin: 14px 0 0 51px; flex: none; }
.vdots { width: 3px; height: 13px; margin: 15px 18px 0 0; background: radial-gradient(circle, #ddd 1.300px, transparent 1.600px) 0 0 / 3px 5px; flex: none; }
.hscroll { width: 721px; height: 21px; margin: 9px 23px 0 0; border-radius: 10px; background: #3f3f3f; display: flex; align-items: center; padding: 0 6px; }
.harr { width: 8px; height: 12px; flex: none; }
.hthumb { height: 11px; width: 649px; background: #c6c6c6; border-radius: 4px; margin: 0 42px 0 8px; flex: none; }

/* status bar */
.status { height: 27px; flex: none; display: flex; align-items: center; font-size: 13px; padding-left: 14px; }
.ready { width: 62px; }
.a11y { width: 20px; height: 20px; margin-right: 1px; }
.a11y-text { font-size: 12.700px; }
.view { width: 50px; height: 27px; display: flex; align-items: center; justify-content: center; flex: none; }
.view svg { width: 17px; height: 17px; }
.active-view { background: #646464; }
.zoom-minus { width: 10px; height: 1px; background: #ddd; margin-left: 7px; }
.slider { width: 125px; height: 1px; background: #ccc; margin-left: 6px; position: relative; }
.slider-thumb { position: absolute; left: 59px; top: -10px; width: 6px; height: 21px; background: #bbb; }
.zoom-plus { width: 10px; height: 10px; margin-left: 5px; }
.zoom-val { width: 42px; margin-left: 17px; font-size: 12.500px; letter-spacing: -.3px; }
.bottom-edge { flex: 1; background: #1a1a1a; }

/* on-screen keyboard window */
.osk { position: absolute; left: 136px; top: 273px; width: 1578px; height: 496px; background: #1a1a1a; border-radius: 8px; box-shadow: 0 10px 40px rgba(0,0,0,.3); }
.osk-title { height: 37px; background: #f3f3f3; border-radius: 8px 8px 0 0; display: flex; align-items: center; padding-left: 9px; }
.osk-ico { width: 20px; height: 20px; }
.osk-name { color: #888; font-size: 14.300px; margin-left: 7px; letter-spacing: -.1px; }
.osk-btn { width: 13px; height: 13px; margin-right: 45px; }
.osk-btn:last-child { margin-right: 24px; }
.keys { padding: 82px 0 0 4px; display: flex; flex-direction: column; gap: 4px; }
.kb-row { display: flex; gap: 4px; height: 71px; }
.kb-row.tall-row { height: 72px; }
.key { width: 82px; flex: none; background: #333; color: #f2f2f2; font-size: 18.500px; line-height: 24px; padding: 0 0 0 5px; position: relative; letter-spacing: -.2px; white-space: nowrap; }
.w131 { width: 131px; } .w125 { width: 125px; } .w88 { width: 88px; } .w168 { width: 168px; } .w217 { width: 217px; } .w211 { width: 211px; } .w174 { width: 174px; } .w471 { width: 471px; } .w86 { width: 86px; }
.nav-key { width: 70px; padding-left: 4px; }
.nav-first { margin-left: 9px; }
.nav-last { margin-left: 4px; }
.big-l { font-size: 24px; line-height: 30px; padding: 0 0 0 4px; }
.lit { background: #3c3c3c; }
.center { display: flex; align-items: center; justify-content: center; padding: 0; }
.dual { display: flex; flex-direction: column; padding: 3px 0 0 5px; }
.up { font-size: 24px; line-height: 28px; height: 28px; }
.lo { font-size: 26px; line-height: 30px; color: #6f6f6f; padding-left: 35px; }
.on { background: #e3e3e3; color: #111; }
.off { color: #6b6b6b; }
.opt { font-size: 15px; border-top: 3px solid #1a1a1a; letter-spacing: -.2px; line-height: 20px; }
.help { padding-top: 4px; }
.bksp { width: 20px; height: 16px; position: absolute; left: 5px; top: 3px; }
.arrow-up { width: 28px; height: 15px; display: block; margin-top: 3px; }
.arrow-dn { width: 28px; height: 15px; display: block; margin-top: 3px; }
.arrow-side { width: 16px; height: 26px; display: block; margin-top: 3px; }
.win { width: 14px; height: 14px; margin-right: 3px; }
.menu-key { width: 10px; height: 14px; margin-left: 0; }
.mark { position: absolute; border-style: solid; border-color: #d8202a; pointer-events: none; }
.mark-title { left: -2px; top: -3px; width: 235px; height: 46px; border-width: 5px 5px 6px 4px; }
.mark-key { left: 1417px; top: 343px; width: 89px; height: 81px; border-width: 5px 9px 7px 9px; }
```
